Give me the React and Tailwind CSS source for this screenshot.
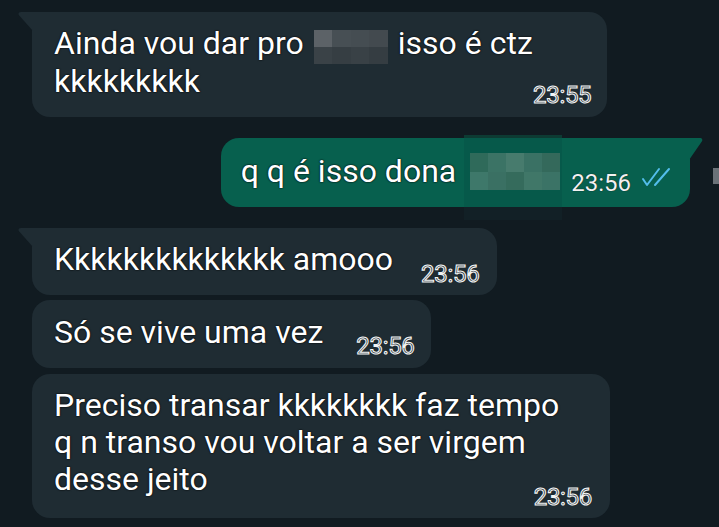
import React from "react";

const IN = "#1f2c33";
const OUT = "#07604e";

function InTail() {
  return (
    <svg className="absolute left-[-14px] top-0" width="15" height="19" viewBox="0 0 15 19">
      <path d="M15 0 H3 C0.6 0 -0.2 2 1.2 3.6 L15 19 Z" fill={IN} />
    </svg>
  );
}

function OutTail() {
  return (
    <svg className="absolute right-[-13px] top-0" width="14" height="22" viewBox="0 0 14 22">
      <path d="M0 0 H11 C13.2 0 14 2 12.8 3.6 L0 22 Z" fill={OUT} />
    </svg>
  );
}

const txt = "text-white [text-shadow:0_0_2px_rgba(0,0,0,0.95),0_0_1px_rgba(0,0,0,0.9)]";

function InTime({ children, className }) {
  return (
    <span
      className={
        "text-[24px] leading-[24px] text-[#2f393f] [-webkit-text-stroke:1.1px_#f2f4f5] [text-shadow:0_0_1px_#000,0_0_1px_#000] tracking-[-0.3px] " +
        className
      }
    >
      {children}
    </span>
  );
}

function Blur1() {
  const cells = ["#5c6267", "#474f54", "#454d52", "#434a4f", "#3a4247", "#363e43", "#394146", "#353d42"];
  return (
    <span className="mx-[10px] inline-grid h-[34px] w-[74px] translate-y-[6px] grid-cols-4 grid-rows-2 align-top">
      {cells.map((c, i) => (
        <span key={i} style={{ backgroundColor: c }} />
      ))}
    </span>
  );
}

function Blur2() {
  const cells = [
    "#2f6a5a", "#3b7365", "#477b6d", "#3a7164", "#34695b",
    "#3e786a", "#3a7063", "#356b5c", "#407768", "#3b7366",
  ];
  return (
    <div className="-mb-[30px] -mt-[17px] ml-[8px] flex w-[98px] flex-col self-stretch bg-[#06594a]">
      <div className="h-[3px] bg-[#0d3b33]" />
      <div className="flex-1 pl-[6px] pt-[15px]">
        <div className="grid h-[37px] w-[90px] grid-cols-5 grid-rows-2">
          {cells.map((c, i) => (
            <span key={i} style={{ backgroundColor: c }} />
          ))}
        </div>
      </div>
      <div className="h-[13px] bg-[#122026]" />
    </div>
  );
}

function Checks() {
  return (
    <svg className="mb-[3px] ml-[10px]" width="32" height="20" viewBox="0 0 32 20" fill="none" stroke="#53bdeb" strokeWidth="2" strokeLinecap="round" strokeLinejoin="round">
      <path d="M2 12 L6 18 L18 2" />
      <path d="M14 18 L28 2" />
    </svg>
  );
}

export default function App() {
  return (
    <div className="flex h-[527px] w-[719px] flex-col overflow-hidden bg-[#111b21] font-[Roboto,sans-serif]">
      {/* Bubble 1 */}
      <div className="relative ml-[32px] mt-[12px] flex w-fit items-end rounded-[18px] rounded-tl-none bg-[#1f2c33] pb-[17px] pl-[22px] pr-[16px] pt-[12px]">
        <InTail />
        <div className={`w-[476px] whitespace-nowrap text-[32px] leading-[38px] ${txt}`}>
          Ainda vou dar pro<Blur1 />isso é ctz
          <br />
          kkkkkkkkk
        </div>
        <InTime className="-mb-[7px] ml-[3px]">23:55</InTime>
      </div>

      {/* Bubble 2 */}
      <div className="mt-[21px] flex items-start justify-end">
        <div className="relative flex items-end rounded-[18px] rounded-tr-none bg-[#07604e] pb-[17px] pl-[20px] pr-[17px] pt-[14px]">
          <OutTail />
          <div className={`whitespace-nowrap text-[32px] leading-[38px] ${txt}`}>q q é isso dona</div>
          <Blur2 />
          <span className="-mb-[5px] ml-[9px] text-[24px] leading-[24px] text-[#f2f2f2] [text-shadow:0_0_1px_#000]">23:56</span>
          <Checks />
        </div>
        <div className="ml-[23px] mt-[30px] h-[16px] w-[6px] bg-[#6b7278]" />
      </div>

      {/* Bubble 3 */}
      <div className="relative ml-[32px] mt-[21px] flex w-fit items-end rounded-[18px] rounded-tl-none bg-[#1f2c33] pb-[17px] pl-[22px] pr-[18px] pt-[12px]">
        <InTail />
        <div className={`whitespace-nowrap text-[32px] leading-[38px] ${txt}`}>Kkkkkkkkkkkkkk amooo</div>
        <InTime className="-mb-[8px] ml-[28px]">23:56</InTime>
      </div>

      {/* Bubble 4 */}
      <div className="ml-[32px] mt-[5px] flex w-fit items-end rounded-[18px] bg-[#1f2c33] pb-[17px] pl-[22px] pr-[16px] pt-[13px]">
        <div className={`whitespace-nowrap text-[32px] leading-[38px] ${txt}`}>Só se vive uma vez</div>
        <InTime className="-mb-[7px] ml-[33px]">23:56</InTime>
      </div>

      {/* Bubble 5 */}
      <div className="ml-[32px] mt-[6px] flex w-[578px] flex-col rounded-[18px] bg-[#1f2c33] pb-[9px] pl-[22px] pr-[18px] pt-[13px]">
        <div className={`whitespace-nowrap text-[32px] leading-[37px] ${txt}`}>
          Preciso transar kkkkkkkk faz tempo
          <br />
          q n transo vou voltar a ser virgem
          <br />
          desse jeito
        </div>
        <InTime className="-mt-[13px] self-end">23:56</InTime>
      </div>
    </div>
  );
}
